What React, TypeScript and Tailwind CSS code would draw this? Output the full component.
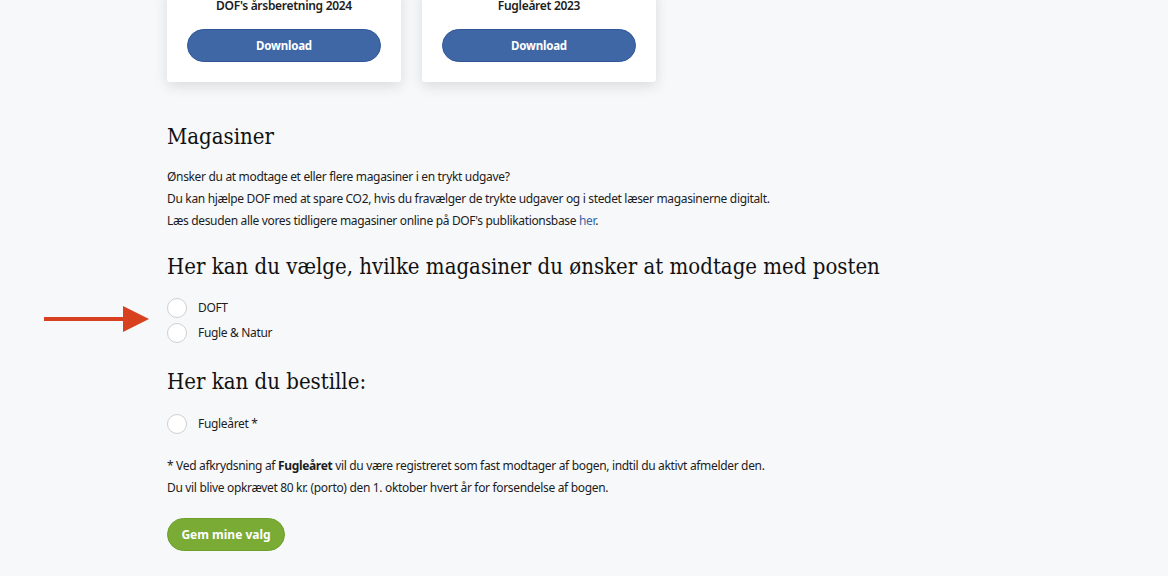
function Radio({ label }: { label: string }) {
  return (
    <label className="flex items-center h-[25px]">
      <span className="w-[20px] h-[20px] rounded-full border border-[#cfcfcf] bg-white shrink-0" />
      <span className="ml-[11px] text-[12px] tracking-[-0.33px] text-[#1c1c1c]">{label}</span>
    </label>
  );
}

function Card({ title }: { title: string }) {
  return (
    <div className="w-[234px] h-[92px] bg-white rounded-[3px] shadow-[0_4px_14px_rgba(0,0,0,0.12)] flex flex-col items-center pt-[4px]">
      <div className="text-[12px] tracking-[-0.3px] font-semibold text-[#1c1c1c] leading-[24px]">{title}</div>
      <button className="mt-[11px] w-[194px] h-[33px] rounded-full bg-[#3f67a6] border border-[#2f5595] text-white text-[11.5px] tracking-[-0.2px] font-bold">
        Download
      </button>
    </div>
  );
}

export default function App() {
  const h = "text-[22px] leading-[30px] text-[#111] font-['DejaVu_Serif',serif] [font-stretch:semi-condensed]";
  return (
    <div className="w-[1168px] h-[576px] bg-[#f7f8fa] overflow-hidden relative font-['Noto_Sans',sans-serif]">
      <div className="pl-[167px]">
        <div className="flex gap-[21px] -mt-[10px]">
          <Card title="DOF's årsberetning 2024" />
          <Card title="Fugleåret 2023" />
        </div>
        <h2 className={`mt-[40px] ${h}`}>Magasiner</h2>
        <div className="mt-[14px] text-[12px] tracking-[-0.33px] leading-[22px] text-[#1c1c1c]">
          <p>Ønsker du at modtage et eller flere magasiner i en trykt udgave?</p>
          <p>Du kan hjælpe DOF med at spare CO2, hvis du fravælger de trykte udgaver og i stedet læser magasinerne digitalt.</p>
          <p>
            Læs desuden alle vores tidligere magasiner online på DOF's publikationsbase{" "}
            <span className="text-[#3465a4]">her</span>.
          </p>
        </div>
        <h2 className={`mt-[20px] ${h}`}>Her kan du vælge, hvilke magasiner du ønsker at modtage med posten</h2>
        <div className="mt-[13px] flex flex-col">
          <Radio label="DOFT" />
          <Radio label="Fugle & Natur" />
        </div>
        <h2 className={`mt-[22px] ${h}`}>Her kan du bestille:</h2>
        <div className="mt-[14px] flex flex-col">
          <Radio label="Fugleåret *" />
        </div>
        <div className="mt-[19px] text-[12px] tracking-[-0.33px] leading-[22px] text-[#1c1c1c]">
          <p>
            * Ved afkrydsning af <b className="font-bold">Fugleåret</b> vil du være registreret som fast modtager af bogen, indtil du aktivt afmelder den.
          </p>
          <p>Du vil blive opkrævet 80 kr. (porto) den 1. oktober hvert år for forsendelse af bogen.</p>
        </div>
        <button className="mt-[19px] w-[118px] h-[33px] rounded-full bg-[#7aac35] border border-[#6c9f2c] text-white text-[12px] font-bold">
          Gem mine valg
        </button>
      </div>
      <svg className="absolute left-[44px] top-[306px]" width="106" height="26" viewBox="0 0 106 26">
        <rect x="0" y="11" width="82" height="4" fill="#d8411f" />
        <polygon points="79,0 105,13 79,26" fill="#d8411f" />
      </svg>
    </div>
  );
}
